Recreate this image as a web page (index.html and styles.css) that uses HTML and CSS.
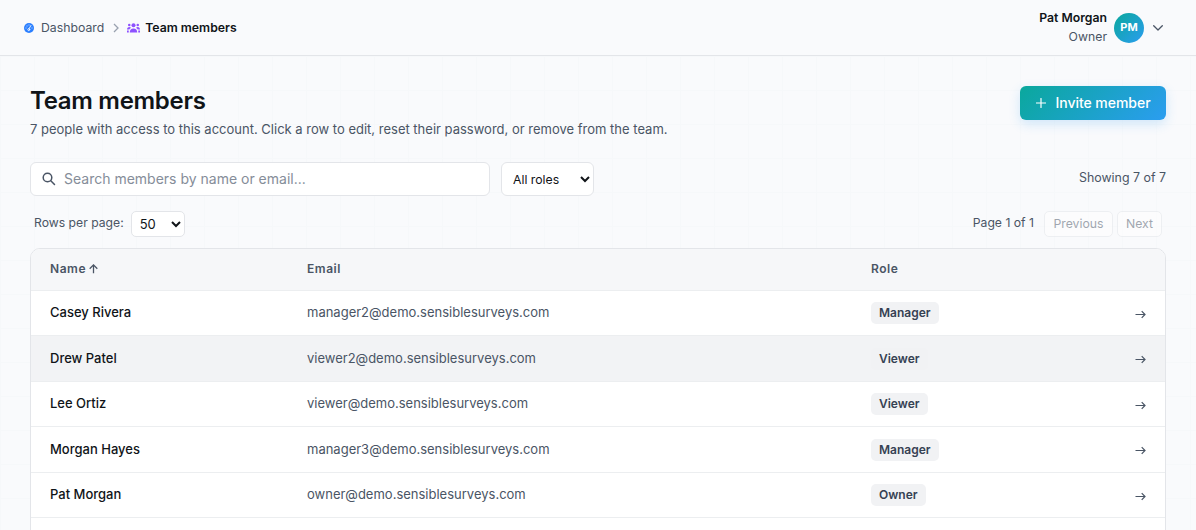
FILE: index.html
```html
<!DOCTYPE html>
<html lang="en">
<head>
<meta charset="utf-8">
<title>Team members</title>
<link rel="stylesheet" href="styles.css">
</head>
<body>
<header class="topbar">
  <nav class="crumbs">
    <a class="crumb">
      <svg class="crumb-gauge" viewBox="0 0 20 20"><circle cx="10" cy="10" r="10" fill="#2b7fff"/><g fill="none" stroke="#f9fafb" stroke-width="1.8" stroke-linecap="round"><path d="M10 11.5 13.8 5"/><circle cx="9.5" cy="13.3" r="2"/><path d="M4 10h.1M6 6h.1M10 4h.1M16 10h.1"/></g></svg>
      <span>Dashboard</span>
    </a>
    <svg class="crumb-sep" viewBox="0 0 6 10"><path d="M1 1l4 4-4 4" fill="none" stroke="#99a1af" stroke-width="1.300"/></svg>
    <span class="crumb current">
      <svg class="crumb-team" viewBox="0 0 26 20" fill="#8e51ff"><circle cx="13" cy="4.500" r="4"/><circle cx="4.500" cy="4" r="2.500"/><circle cx="21.500" cy="4" r="2.500"/><path d="M5.500 19c0-5 3-8 7.500-8s7.500 3 7.500 8zM0 13c0-3 2-5 4.500-5 1.500 0 2.500.5 3.500 1.500C6 10.700 5 12 4.500 13zM26 13c0-3-2-5-4.500-5-1.500 0-2.500.5-3.500 1.500 2 1.200 3 2.500 3.500 3.500z"/><path d="M0 15h3.500v4H0zM22.500 15H26v4h-3.500z"/></svg>
      <span>Team members</span>
    </span>
  </nav>
  <div class="account">
    <div class="who"><strong>Pat Morgan</strong><span>Owner</span></div>
    <div class="avatar">PM</div>
    <svg class="chevron" viewBox="0 0 10 6"><path d="M.7.7 5 5 9.300.7" fill="none" stroke="#4a5565" stroke-width="1.3" stroke-linecap="round" stroke-linejoin="round"/></svg>
  </div>
</header>
<main class="page">
  <section class="heading">
    <div>
      <h1>Team members</h1>
      <p>7 people with access to this account. Click a row to edit, reset their password, or remove from the team.</p>
    </div>
    <button class="invite"><svg viewBox="0 0 10 10"><path d="M5 .5v9M.5 5h9" stroke="#fff" stroke-width="1.2" stroke-linecap="round"/></svg><span>Invite member</span></button>
  </section>
  <section class="filters">
    <label class="search">
      <svg viewBox="0 0 14 14" fill="none" stroke="#4a5565" stroke-width="1.5" stroke-linecap="round"><circle cx="5.500" cy="5.500" r="4.300"/><path d="M8.800 8.800l3.700 3.700"/></svg>
      <input type="text" placeholder="Search members by name or email...">
    </label>
    <select class="roles"><option>All roles</option></select>
    <span class="showing">Showing 7 of 7</span>
  </section>
  <section class="pager">
    <span class="rows-label">Rows per page:</span>
    <select class="rows"><option>50</option></select>
    <span class="page-count">Page 1 of 1</span>
    <button class="page-btn" disabled>Previous</button>
    <button class="page-btn next" disabled>Next</button>
  </section>
  <section class="table">
    <div class="row head"><span>Name <svg class="sort" viewBox="0 0 9 10"><path d="M4.500 9.300V1M.7 4.700 4.500.9l3.800 3.800" fill="none" stroke="#4a5565" stroke-width="1.3"/></svg></span><span>Email</span><span>Role</span></div>
    <div class="row"><span class="name">Casey Rivera</span><span class="email">manager2@demo.sensiblesurveys.com</span><span class="role"><b>Manager</b></span><svg class="go" viewBox="0 0 11 9"><path d="M.5 4.500h9.500M6.700 1.200 10 4.500 6.700 7.800"/></svg></div>
    <div class="row hover"><span class="name">Drew Patel</span><span class="email">viewer2@demo.sensiblesurveys.com</span><span class="role"><b>Viewer</b></span><svg class="go" viewBox="0 0 11 9"><path d="M.5 4.500h9.500M6.700 1.200 10 4.500 6.700 7.800"/></svg></div>
    <div class="row"><span class="name">Lee Ortiz</span><span class="email">viewer@demo.sensiblesurveys.com</span><span class="role"><b>Viewer</b></span><svg class="go" viewBox="0 0 11 9"><path d="M.5 4.500h9.500M6.700 1.200 10 4.500 6.700 7.800"/></svg></div>
    <div class="row"><span class="name">Morgan Hayes</span><span class="email">manager3@demo.sensiblesurveys.com</span><span class="role"><b>Manager</b></span><svg class="go" viewBox="0 0 11 9"><path d="M.5 4.500h9.500M6.700 1.200 10 4.500 6.700 7.800"/></svg></div>
    <div class="row"><span class="name">Pat Morgan</span><span class="email">owner@demo.sensiblesurveys.com</span><span class="role"><b>Owner</b></span><svg class="go" viewBox="0 0 11 9"><path d="M.5 4.500h9.500M6.700 1.200 10 4.500 6.700 7.800"/></svg></div>
  </section>
</main>
</body>
</html>
```
FILE: styles.css
```css
* { box-sizing: border-box; }
body {
  margin: 0;
  height: 530px;
  overflow: hidden;
  background: #f9fafc;
  color: #101418;
  font: 13px/20px Inter, "Liberation Sans", sans-serif;
}
svg { display: block; flex: none; }
input, select, button { font-family: inherit; margin: 0; }

.topbar {
  height: 56px;
  padding: 0 33px 0 24px;
  display: flex;
  align-items: center;
  justify-content: space-between;
  border-bottom: 1px solid #e3e5e9;
  font-size: 12.25px;
}
.crumbs, .crumb { display: flex; align-items: center; }
.crumb { color: #4a5565; }
.current { color: #101418; font-weight: 600; }
.crumb-gauge { width: 10px; height: 10px; margin-right: 7px; }
.crumb-sep { width: 6px; height: 10px; margin: 0 8px 0 9px; }
.crumb-team { width: 13px; height: 10px; margin-right: 5px; }
.account { display: flex; align-items: center; }
.who { display: flex; flex-direction: column; text-align: right; line-height: 19px; margin-right: 7px; padding-bottom: 1px; }
.who strong { font-weight: 600; }
.who span { color: #4a5565; }
.avatar {
  width: 30px;
  height: 30px;
  border-radius: 50%;
  background: linear-gradient(135deg, #0aa89c, #2b9df0);
  color: #fff;
  font-size: 11px;
  font-weight: 700;
  line-height: 29px;
  text-align: center;
}
.chevron { width: 10px; height: 6px; margin-left: 9px; }

.page {
  height: 474px;
  overflow: hidden;
  padding: 30px 30px 0;
  background-image:
    linear-gradient(90deg, #f6f8fa 1px, transparent 1px),
    linear-gradient(#f6f8fa 1px, transparent 1px);
  background-size: 34px 34px;
}
.heading { display: flex; justify-content: space-between; height: 76px; }
h1 { margin: 0; font-size: 24px; line-height: 30px; font-weight: 600; letter-spacing: -.3px; }
.heading p { margin: 3px 0 0; color: #4a5565; }
.invite {
  width: 146px;
  height: 34px;
  display: flex;
  align-items: center;
  justify-content: center;
  gap: 9px;
  padding: 0 0 1px 1px;
  border: 0;
  border-radius: 6px;
  background: linear-gradient(135deg, #0aa89c, #2b9df0);
  box-shadow: 0 4px 12px rgba(43, 157, 240, .2);
  color: #fff;
  font-size: 14px;
  font-weight: 500;
}
.invite span { letter-spacing: -.04px; }
.invite svg { width: 10px; height: 10px; }

.filters { display: flex; align-items: center; height: 34px; }
.search {
  width: 460px;
  height: 34px;
  display: flex;
  align-items: center;
  gap: 8px;
  padding: 0 12px 1px 11px;
  background: #fff;
  border: 1px solid #e3e5e9;
  border-radius: 6px;
}
.search svg { width: 14px; height: 14px; }
.search input { flex: 1; border: 0; padding: 0; outline: 0; font-size: 14px; background: none; }
.search input::placeholder { color: #858d99; }
select { background: #fff; border: 1px solid #e3e5e9; border-radius: 6px; color: #101418; font-size: 12.25px; }
.roles { width: 93px; height: 34px; margin-left: 11px; padding: 0 0 0 7px; }
.showing { margin-left: auto; padding-bottom: 2px; color: #4a5565; font-size: 12.4px; }

.pager { display: flex; align-items: center; height: 26px; margin: 15px 4px 11px; color: #4a5565; font-size: 12.2px; }
.rows-label, .page-count { padding-bottom: 2px; }
.rows { width: 54px; height: 26px; margin-left: 7px; padding: 0 0 0 4px; border-radius: 5px; font-size: 13px; }
.page-count { margin-left: auto; margin-right: 10px; }
.page-btn {
  width: 69px;
  height: 26px;
  padding: 0 0 2px;
  border: 1px solid #e3e5e9;
  border-radius: 5px;
  background: #fff;
  color: #4a5565;
  font-size: 12.25px;
  opacity: .5;
}
.next { width: 45px; margin-left: 4px; }

.table {
  height: 330px;
  overflow: hidden;
  background: #fff;
  border: 1px solid #e3e5e9;
  border-radius: 10px;
}
.row {
  display: grid;
  grid-template-columns: 257px 564px 1fr 11px;
  align-items: center;
  height: 45.5px;
  padding: 0 19px;
  border-bottom: 1px solid #eceef0;
}
.head {
  height: 41.85px;
  background: #f6f7f9;
  color: #4a5565;
  font-size: 12px;
  font-weight: 600;
  letter-spacing: .55px;
}
.sort { display: inline-block; width: 9px; height: 10px; margin-left: -1px; vertical-align: -1px; }
.hover { background: #f2f3f5; }
.name, .email { padding-bottom: 1.5px; }
.name { font-weight: 500; }
.email { color: #4a5565; }
.role b {
  display: inline-block;
  height: 22px;
  padding: 0 8px;
  border-radius: 5px;
  background: #f1f2f4;
  color: #364153;
  font-size: 12px;
  font-weight: 600;
  line-height: 21px;
}
.go { width: 11px; height: 9px; margin-top: 2px; fill: none; stroke: #4a5565; stroke-width: 1.2; }
```
